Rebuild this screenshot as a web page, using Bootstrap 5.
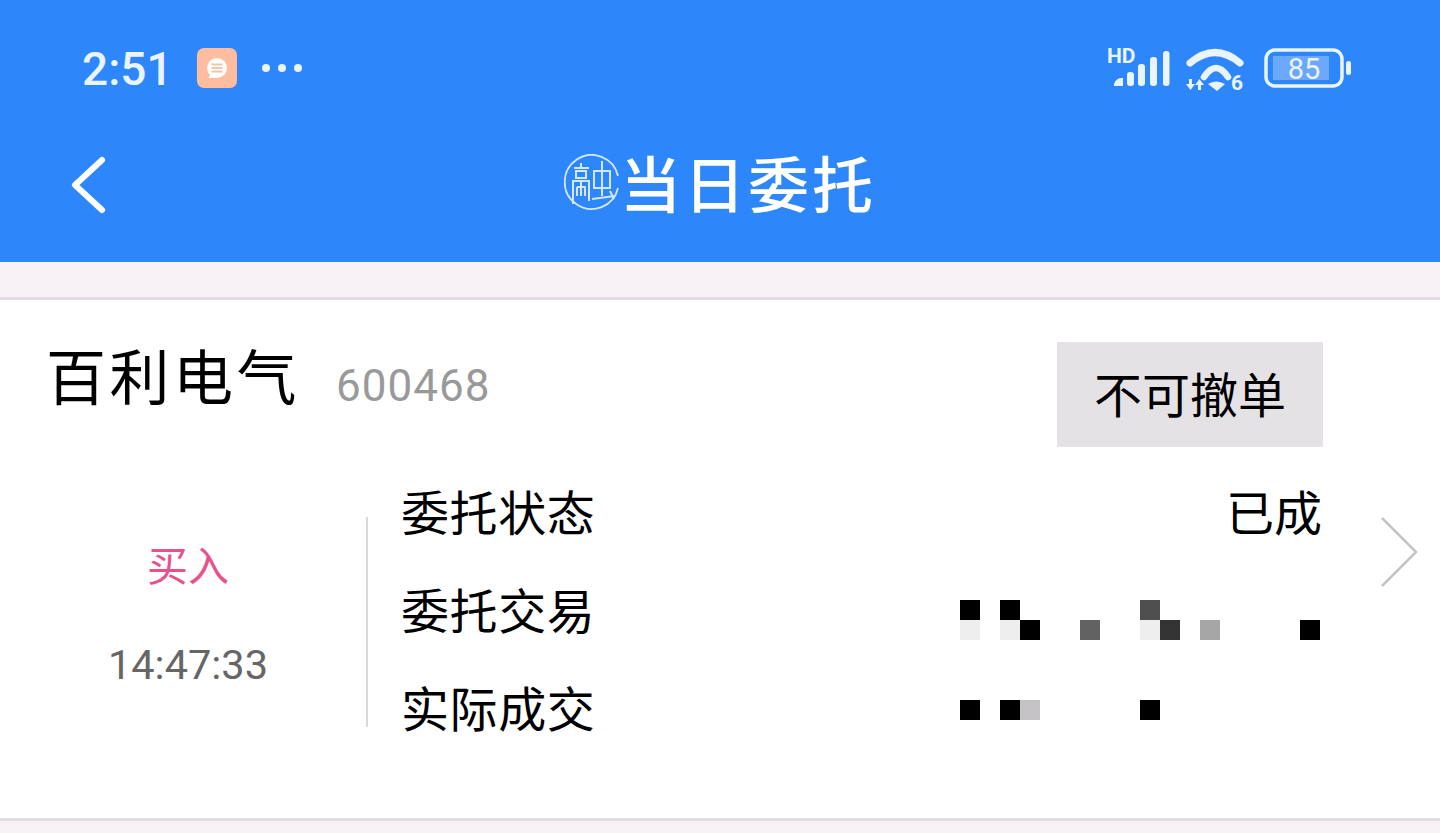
<!DOCTYPE html>
<html lang="zh-CN">
<head>
  <meta charset="UTF-8" />
  <title>当日委托</title>
  <meta name="viewport" content="width=device-width, initial-scale=1.0" />
  <link href="https://cdn.jsdelivr.net/npm/bootstrap@5.3.3/dist/css/bootstrap.min.css" rel="stylesheet">
  <style>
    body { background: #f6f2f6; font-family: "Roboto", "Noto Sans CJK SC", sans-serif; color: #000; height: 833px; overflow: hidden; }
    .cjk { font-family: "Noto Sans CJK SC", sans-serif; }
    .top-area { background: #2d87fb; height: 262px; color: #fff; }
    .status-row { height: 130px; padding: 6px 88px 0 82px; }
    .clock { font-size: 46px; font-weight: 500; line-height: 1; color: #eaf4ff; margin-top: 1px; width: 115px; }
    .msg-icon { width: 40px; height: 40px; background: #ffbc9f; border-radius: 7px; }
    .title-row { height: 132px; position: relative; }
    .back-btn { position: absolute; left: 68px; top: 23px; }
    .rz-mark { margin-top: -26px; margin-right: -2px; }
    .page-title { font-size: 61px; font-weight: 500; line-height: 1; margin-top: -30px; letter-spacing: 3px; }
    .order-card { background: #fff; margin-top: 35px; height: 524px; border-top: 3px solid #e0dde2; border-bottom: 3px solid #e0dde2; }
    .head-row { padding: 42px 117px 0 46px; }
    .stock-name { font-size: 60px; line-height: 80px; letter-spacing: 3.5px; margin-top: -8px; }
    .stock-code { font-size: 44px; color: #999; margin: 4px 0 0 36px; line-height: 80px; letter-spacing: 1px; }
    .cancel-btn { background: #e5e2e6; width: 266px; height: 105px; font-size: 48px; border-radius: 0; padding: 0 0 6px; }
    .side-col { width: 366px; height: 210px; margin-top: 70px; padding-left: 10px; }
    .side-text { font-size: 41px; line-height: 1; color: #e8528c; margin-top: 26px; }
    .side-time { font-size: 41.5px; line-height: 40px; color: #666; margin-top: 61px; }
    .divider { width: 2px; height: 210px; background: #d9d9d9; margin-top: 70px; }
    .info-col { width: 921px; margin-left: 33px; margin-top: 14px; }
    .info-row { height: 98px; font-size: 48px; }
    .info-label { letter-spacing: .6px; }
    .mosaic-two { margin-top: 24px; }
    .mosaic-one { margin-top: 8px; }
    .chevron { margin: 70px 0 0 59px; }
  </style>
</head>
<body>

<!-- Header -->
<div class="top-area">
  <div class="status-row d-flex align-items-center justify-content-between">
    <div class="d-flex align-items-center">
      <span class="clock">2:51</span>
      <span class="msg-icon d-flex align-items-center justify-content-center">
        <svg width="28" height="28" viewBox="0 0 28 28">
          <path d="M14 4a10 10 0 0 1 10 10 10 10 0 0 1-10 10H5.5l1.6-3A10 10 0 0 1 14 4z" fill="#fff"/>
          <path d="M8.5 10.5h11M8.5 14h11M8.5 17.5h11" stroke="#f3c3aa" stroke-width="2"/>
        </svg>
      </span>
      <svg class="ms-4" width="42" height="10" viewBox="0 0 42 10" fill="#eaf4ff">
        <circle cx="5" cy="5" r="4"/><circle cx="21" cy="5" r="4"/><circle cx="37" cy="5" r="4"/>
      </svg>
    </div>
    <div class="d-flex align-items-center">
      <svg width="66" height="50" viewBox="0 0 66 50" fill="#eaf4ff">
        <text x="1" y="20" font-family="Roboto, sans-serif" font-weight="700" font-size="21">HD</text>
        <path d="M8 43v-2a8 8 0 0 1 9-6v8z"/>
        <rect x="21" y="29" width="7" height="14" rx="3"/>
        <rect x="32" y="21" width="7" height="22" rx="3"/>
        <rect x="44" y="14" width="7" height="29" rx="3"/>
        <rect x="57" y="8" width="6.500" height="35" rx="3"/>
      </svg>
      <svg class="wifi-mark" width="60" height="54" viewBox="0 0 60 54" fill="none" stroke="#eaf4ff" stroke-linecap="round" style="margin-left:13px">
        <path d="M5 22Q30 1 55 22" stroke-width="7"/>
        <path d="M19 36Q31 18 43 36" stroke-width="6.500"/>
        <path d="M23 43Q31 38 40 43L32 50z" fill="#eaf4ff" stroke="none"/>
        <path d="M1 43h9l-4.500 6zM4 38h3v6H4zM10 44l4.500-6 4.500 6zM13 43h3v6h-3z" fill="#eaf4ff" stroke="none"/>
        <text x="46" y="49" font-family="Roboto, sans-serif" font-weight="700" font-size="21" fill="#eaf4ff" stroke="none">6</text>
      </svg>
      <svg width="88" height="40" viewBox="0 0 88 40" style="margin-left:19px">
        <rect x="2" y="2" width="76" height="36" rx="9" fill="none" stroke="#eaf4ff" stroke-width="3.500"/>
        <rect x="9" y="8" width="56" height="24" fill="#6ba8fc"/>
        <rect x="82" y="13" width="5" height="14" rx="2.500" fill="#eaf4ff"/>
        <text x="40" y="31" text-anchor="middle" font-family="Roboto, sans-serif" font-size="29" fill="#eaf4ff">85</text>
      </svg>
    </div>
  </div>
  <div class="title-row d-flex align-items-center justify-content-center">
    <a class="back-btn" href="#">
      <svg width="40" height="64" viewBox="0 0 40 64" fill="none" stroke="#fff" stroke-width="6" stroke-linecap="round" stroke-linejoin="round">
        <path d="M34 7L7 32l27 25"/>
      </svg>
    </a>
    <svg class="rz-mark" width="58" height="58" viewBox="0 0 58 58" fill="none" stroke="#d5e7fe" stroke-width="2">
      <path d="M54 34A27 27 0 1 1 54 22" stroke-width="1.800"/>
      <path d="M10 14h15M17 9v5M12 17h10v7H12zM9 50V27h16v20M17 27v15M13 33h8v9M13 33v9"/>
      <path d="M30 17h16v17H30zM38 7v35M28 45l23-3M46 37l4 8"/>
    </svg>
    <span class="page-title cjk">当日委托</span>
  </div>
</div>

<!-- Order card -->
<div class="order-card">
  <div class="head-row d-flex justify-content-between align-items-start">
    <div class="d-flex align-items-start">
      <span class="stock-name cjk">百利电气</span>
      <span class="stock-code">600468</span>
    </div>
    <button class="btn cancel-btn cjk border-0 text-black">不可撤单</button>
  </div>
  <div class="d-flex align-items-start">
    <div class="side-col d-flex flex-column align-items-center">
      <span class="side-text cjk">买入</span>
      <span class="side-time">14:47:33</span>
    </div>
    <div class="divider"></div>
    <div class="info-col cjk">
      <div class="info-row d-flex justify-content-between align-items-center">
        <span class="info-label">委托状态</span><span>已成</span>
      </div>
      <div class="info-row d-flex justify-content-between align-items-center">
        <span class="info-label">委托交易</span>
        <svg class="mosaic-two" width="362" height="40" viewBox="0 0 362 40">
          <rect x="0" y="0" width="20" height="20" fill="#000"/>
          <rect x="0" y="20" width="20" height="20" fill="#eee"/>
          <rect x="40" y="0" width="20" height="20" fill="#000"/>
          <rect x="40" y="20" width="20" height="20" fill="#eee"/>
          <rect x="60" y="20" width="20" height="20" fill="#000"/>
          <rect x="120" y="20" width="20" height="20" fill="#636262"/>
          <rect x="180" y="0" width="20" height="20" fill="#4d4e4d"/>
          <rect x="180" y="20" width="20" height="20" fill="#eee"/>
          <rect x="200" y="20" width="20" height="20" fill="#333"/>
          <rect x="240" y="20" width="20" height="20" fill="#a6a6a6"/>
          <rect x="340" y="20" width="20" height="20" fill="#000"/>
        </svg>
      </div>
      <div class="info-row d-flex justify-content-between align-items-center">
        <span class="info-label">实际成交</span>
        <svg class="mosaic-one" width="362" height="20" viewBox="0 0 362 20">
          <rect x="0" y="0" width="20" height="20" fill="#000"/>
          <rect x="40" y="0" width="20" height="20" fill="#000"/>
          <rect x="60" y="0" width="20" height="20" fill="#c4c2c5"/>
          <rect x="180" y="0" width="20" height="20" fill="#000"/>
        </svg>
      </div>
    </div>
    <svg class="chevron" width="38" height="70" viewBox="0 0 38 70" fill="none" stroke="#c4c4c4" stroke-width="2.500">
      <path d="M1 1l34 34L1 69"/>
    </svg>
  </div>
</div>

<script src="https://cdn.jsdelivr.net/npm/bootstrap@5.3.3/dist/js/bootstrap.bundle.min.js"></script>
</body>
</html>
